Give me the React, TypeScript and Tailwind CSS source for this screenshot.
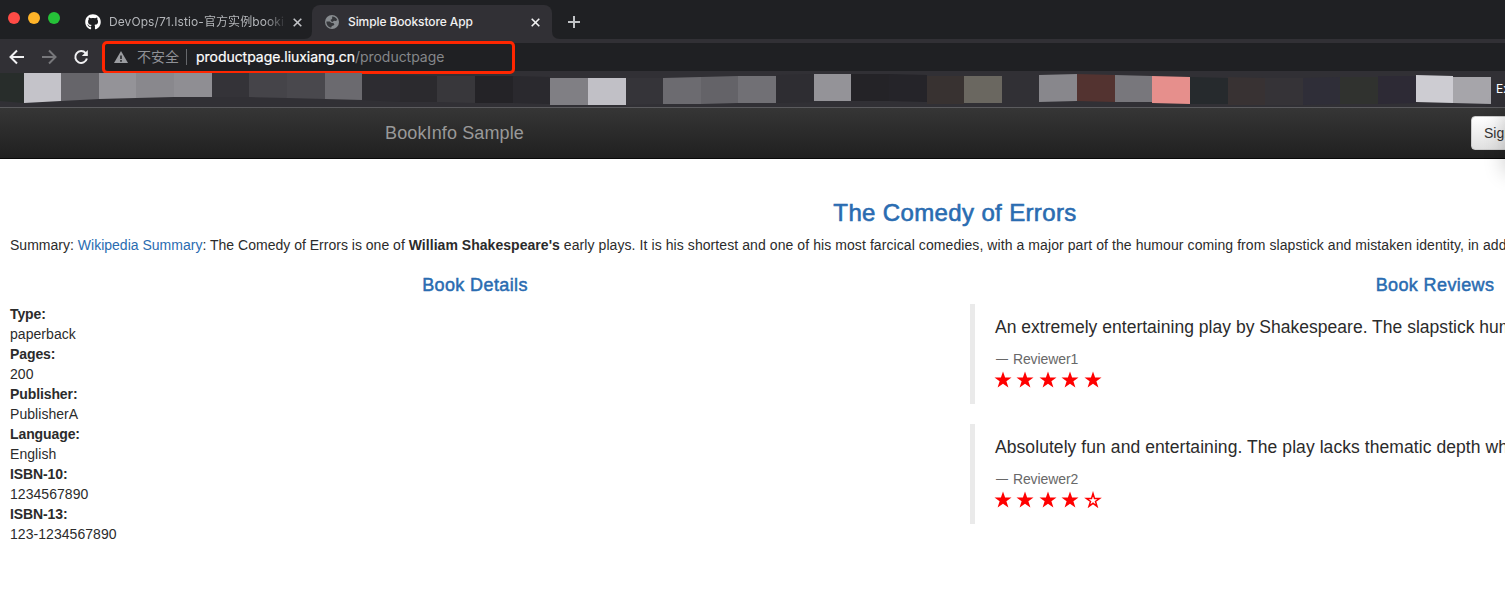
import React from "react";
import { FaGithub } from "react-icons/fa";

type Block = [number, string, number, number, number, number];

// width, colour, top-left, top-right, bottom-right, bottom-left
const blocks: Block[] = [
  [24, "#282d2b", 2, 2, 32, 30],
  [37, "#c4c3c9", 2, 2, 30, 32],
  [38, "#66656a", 2, 2, 28, 30],
  [37, "#949398", 2, 2, 27, 28],
  [38, "#89888d", 2, 2, 26, 27],
  [38, "#8f8e93", 2, 2, 26, 26],
  [37, "#343338", 2, 2, 26, 26],
  [38, "#454449", 2, 2, 27, 26],
  [38, "#49484d", 2, 2, 28, 27],
  [37, "#6b6a6f", 2, 2, 29, 28],
  [38, "#2d2c31", 3, 4, 31, 29],
  [37, "#2b2a2e", 4, 5, 31, 31],
  [38, "#38373b", 5, 5, 32, 31],
  [38, "#242327", 5, 5, 32, 32],
  [37, "#2a292e", 5, 6, 33, 32],
  [38, "#807f84", 7, 7, 34, 34],
  [38, "#c1c0c6", 7, 7, 34, 34],
  [37, "#353439", 7, 7, 33, 34],
  [38, "#6c6b70", 7, 6, 33, 33],
  [37, "#646368", 6, 5, 32, 33],
  [38, "#717075", 5, 5, 32, 32],
  [38, "#2e2d32", 4, 3, 31, 32],
  [37, "#949398", 3, 3, 30, 30],
  [38, "#242327", 3, 3, 30, 30],
  [38, "#252429", 3, 4, 31, 30],
  [37, "#383231", 5, 5, 33, 33],
  [38, "#6a6760", 5, 5, 32, 32],
  [37, "#313035", 5, 5, 32, 32],
  [38, "#88878c", 4, 3, 30, 31],
  [38, "#533330", 3, 4, 31, 30],
  [37, "#78777c", 4, 5, 31, 31],
  [38, "#e68f8c", 5, 6, 33, 32],
  [38, "#262a2d", 6, 7, 33, 33],
  [37, "#383233", 6, 7, 34, 34],
  [38, "#353337", 7, 7, 34, 34],
  [37, "#2f2e38", 7, 6, 33, 34],
  [38, "#30322f", 6, 6, 33, 33],
  [38, "#2d2a35", 5, 5, 32, 33],
  [37, "#cdccd2", 4, 5, 32, 31],
  [38, "#a6a5aa", 6, 6, 33, 32],
];

const details = [
  ["Type:", "paperback"],
  ["Pages:", "200"],
  ["Publisher:", "PublisherA"],
  ["Language:", "English"],
  ["ISBN-10:", "1234567890"],
  ["ISBN-13:", "123-1234567890"],
];

const reviews = [
  { text: "An extremely entertaining play by Shakespeare. The slapstick humour is refreshing!", by: "Reviewer1", stars: 5, tracking: "tracking-[0.02px]" },
  { text: "Absolutely fun and entertaining. The play lacks thematic depth when compared to other plays by Shakespeare.", by: "Reviewer2", stars: 4, tracking: "tracking-[0.07px]" },
];

function Close({ className }: { className: string }) {
  return (
    <svg className={className} width="9" height="9" viewBox="0 0 9 9" stroke="currentColor" strokeWidth="1.6">
      <path d="M.7.7l7.6 7.6M8.3.7L.7 8.3" />
    </svg>
  );
}

function Star({ filled }: { filled: boolean }) {
  return (
    <svg width="18" height="17" viewBox="0 0 18 17" className="mr-[4.4px] shrink-0">
      <path
        d={filled
          ? "M9 .4l2.100 6.100h6.400l-5.100 3.800 2 6.200L9 12.700l-5.400 3.800 2-6.200L.5 6.500h6.400z"
          : "M9 2.500l1.500 4.900h5.100l-4.100 3.100 1.500 4.800L9 12.300l-4 3 1.500-4.800-4.100-3.100h5.100z"}
        fill={filled ? "#f00" : "none"}
        stroke={filled ? "none" : "#f00"}
        strokeWidth="1.5"
      />
    </svg>
  );
}

function TabStrip() {
  return (
    <div className="flex h-[39px] bg-[#1f2023]">
      <div className="flex h-9 w-[85px] items-center gap-2 pl-2">
        <i className="size-3 rounded-full bg-[#ff4b46]" />
        <i className="size-3 rounded-full bg-[#ffb429]" />
        <i className="size-3 rounded-full bg-[#25c138]" />
      </div>
      <div className="mt-[5px] flex h-[34px] w-[227px] items-center text-[#b4b6ba]">
        <FaGithub className="size-4 shrink-0 text-white" />
        <div className="ml-2 w-[176px] overflow-hidden whitespace-nowrap text-[12px] tracking-[0.08px] [mask-image:linear-gradient(to_right,black_156px,transparent_178px)]">
          DevOps/71.Istio-<span className="tracking-[0.1px]">官方实例</span>bookinfo
        </div>
        <Close className="ml-[8px] shrink-0 text-[#c2c4c8]" />
      </div>
      <div className="relative mt-[5px] flex h-[34px] w-[240px] items-center rounded-t-[8px] bg-[#313035] text-[#f1f1f2]">
        <svg className="absolute bottom-0 -left-2" width="8" height="8"><path d="M8 0v8H0Q8 8 8 0z" fill="#313035" /></svg>
        <svg className="absolute -right-2 bottom-0" width="8" height="8"><path d="M0 0v8h8Q0 8 0 0z" fill="#313035" /></svg>
        <svg className="ml-[13px] shrink-0" width="14" height="14" viewBox="0 0 14 14">
          <circle cx="7" cy="7" r="7" fill="#878b8f" />
          <path d="M7.200 1.500c2.200 0 4.300 1.400 5 3.600L10.900 6 9 5.800 7.600 6.900 6 6.300 5.600 4.700l1.500-.8zM1.400 6.400l3.400.1 1.300 1.300 2.300.3 1 1.300-1 1.200-1.600.3-.5 1.700C3.500 12.300 1.200 9.700 1.400 6.400z" fill="#35363a" />
        </svg>
        <span className="ml-[9px] whitespace-nowrap text-[12px] font-medium tracking-[-0.1px]">Simple Bookstore App</span>
        <Close className="ml-auto mr-[12px] shrink-0" />
      </div>
      <svg className="ml-4 mt-4" width="12" height="12" stroke="#c0c2c5" strokeWidth="2"><path d="M6 0v12M0 6h12" /></svg>
    </div>
  );
}

function Toolbar() {
  return (
    <div className="flex h-8 items-center bg-[#313035]">
      <svg className="ml-2 mt-1" width="82" height="16" fill="none" strokeWidth="2">
        <path d="M16 8H3M9 1.500L2.500 8 9 14.500" stroke="#f1f1f3" />
        <path d="M34 8h13M41 1.500L47.500 8 41 14.500" stroke="#77777b" />
        <path d="M77.700 4.200A5.900 5.900 0 1 0 78.900 9.500" stroke="#f1f1f3" />
        <path d="M79.800 1v6h-6z" fill="#f1f1f3" />
      </svg>
      <div className="relative ml-3 mt-1 flex h-7 grow items-center rounded-l-[8px] bg-[#1f2023] pl-3">
        <svg width="14" height="12" viewBox="0 0 14 12" className="shrink-0">
          <path d="M7 0l7 12H0z" fill="#9a9ca0" /><path d="M7 4.500v3.500M7 9v1.700" stroke="#1f2023" strokeWidth="1.500" />
        </svg>
        <span className="-mt-[2px] ml-[9px] text-[14px] text-[#8f9196]">不安全</span>
        <span className="ml-[7px] h-4 w-px bg-[#66686c]" />
        <span className="-mt-[2px] ml-[9px] whitespace-nowrap text-[14px] tracking-[-0.04px] text-[#85878a]">
          <span className="text-white [-webkit-text-stroke:0.2px_white]">productpage.liuxiang.cn</span>/productpage
        </span>
        <div className="absolute -top-[2px] left-0 h-[33px] w-[413px] rounded-[5px] border-[3px] border-[#ff2600]" />
      </div>
    </div>
  );
}

function Bookmarks() {
  return (
    <div className="flex h-9 w-[1600px] bg-[#313035]">
      {blocks.map(([w, color, tl, tr, br, bl], i) => (
        <div
          key={i}
          className="h-full shrink-0"
          style={{ width: w, background: color, clipPath: `polygon(0 ${tl}px, 100% ${tr}px, 100% ${br}px, 0 ${bl}px)` }}
        />
      ))}
      <span className="ml-[5px] mt-[10px] text-[12px] leading-4 text-white">Extensions</span>
    </div>
  );
}

export default function App() {
  return (
    <div className="relative h-[598px] w-[1505px] overflow-hidden bg-white">
      <div className="font-['Inter','Noto_Sans_CJK_SC',sans-serif]">
        <TabStrip />
        <Toolbar />
        <Bookmarks />
      </div>
      <div className="w-[1910px] font-['Liberation_Sans',Arial,sans-serif] text-[14px] leading-5 text-[#2b2b2b]">
        <nav className="flex h-[52px] border-t border-b border-t-[#5b5b5e] border-b-[#090909] bg-linear-to-b from-[#363636] to-[#202020]">
          <span className="ml-[385px] mt-[15px] w-[1086px] text-[18px] tracking-[0.12px] text-[#999]">BookInfo Sample</span>
          <button className="mt-2 h-[34px] w-[74px] rounded-[4px] border border-[#ccc] bg-linear-to-b from-white to-[#e0e0e0] pl-[12px] text-left text-[#333]">Sign in</button>
        </nav>
        <main>
          <h3 className="mt-[41px] text-center text-[24px] leading-[26px] tracking-[0.36px] text-[#2a6cb1] [-webkit-text-stroke:0.6px_#2a6cb1]">The Comedy of Errors</h3>
          <p className="mt-[9px] whitespace-nowrap pl-[10px] tracking-[0.08px]">
            <span className="tracking-[0.01px]">Summary: <a className="text-[#2a6cb1]">Wikipedia Summary</a>: The Comedy of Errors is one of </span><b className="tracking-[0.04px]">William Shakespeare's</b> early plays. It is his shortest and one of his most farcical comedies, with a major part of the humour coming from slapstick and mistaken identity, in addition to puns and word play.
          </p>
          <div className="flex">
            <section className="w-[950px]">
              <h4 className="mt-5 text-center text-[18px] leading-5 tracking-[0.38px] text-[#2a6cb1] [-webkit-text-stroke:0.5px_#2a6cb1]">Book Details</h4>
              <dl className="ml-[10px] mt-[9px]">
                {details.map(([k, v]) => (
                  <React.Fragment key={k}><dt className="font-bold tracking-[-0.1px]">{k}</dt><dd className="tracking-[0.05px]">{v}</dd></React.Fragment>
                ))}
              </dl>
            </section>
            <section className="ml-[10px] w-[950px]">
              <h4 className="mt-5 text-center text-[18px] leading-5 tracking-[0.38px] text-[#2a6cb1] [-webkit-text-stroke:0.5px_#2a6cb1]">Book Reviews</h4>
              <div className="ml-[10px] mt-[9px] flex flex-col gap-5">
                {reviews.map((r) => (
                  <blockquote key={r.by} className="h-[100px] whitespace-nowrap border-l-[5px] border-[#eaeaea] pl-5 pt-[11px]">
                    <p className={`text-[17.5px] leading-[25px] ${r.tracking}`}>{r.text}</p>
                    <small className="mt-[9px] flex items-center text-[14px] leading-5 tracking-[-0.1px] text-[#686868]">
                      <span className="mr-[5px] ml-px text-[12px]">—</span>{r.by}
                    </small>
                    <div className="-ml-px mt-[2px] flex">
                      {[1, 2, 3, 4, 5].map((n) => <Star key={n} filled={n <= r.stars} />)}
                    </div>
                  </blockquote>
                ))}
              </div>
            </section>
          </div>
        </main>
      </div>
      <div className="pointer-events-none absolute top-[109px] -right-[42px] h-[60px] w-10 shadow-[0_0_20px_4px_rgba(0,0,0,0.18)]" />
    </div>
  );
}
